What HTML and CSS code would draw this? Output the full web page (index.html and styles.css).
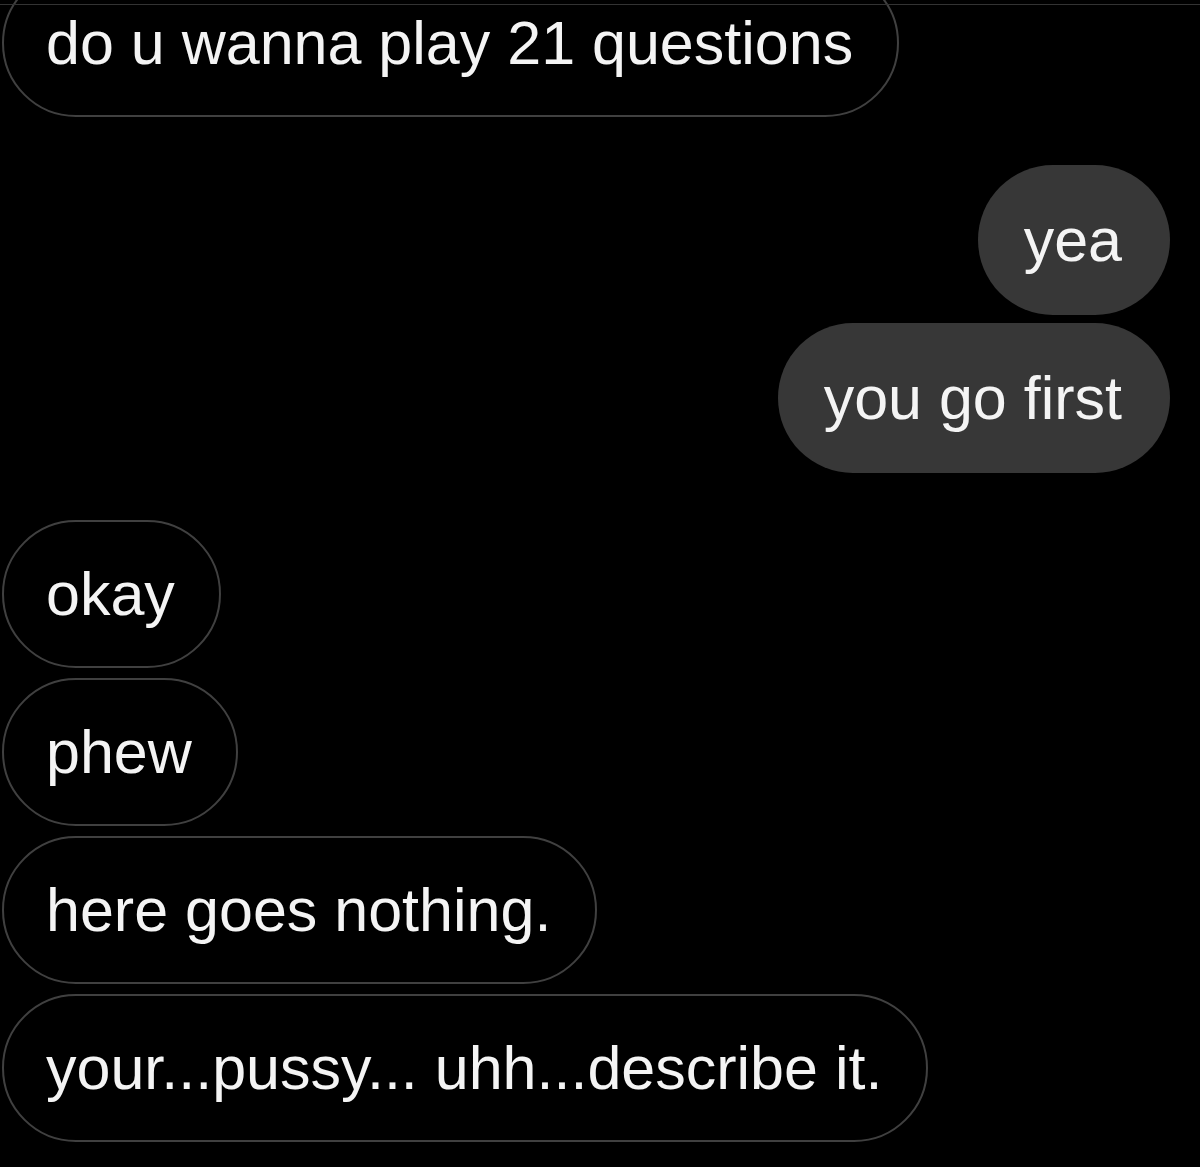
FILE: index.html
```html
<!DOCTYPE html>
<html lang="en">
<head>
<meta charset="utf-8">
<title>Chat</title>
<link rel="stylesheet" href="styles.css">
</head>
<body>
<div class="chat">
  <div class="bubble in first">do u wanna play 21 questions</div>
  <div class="bubble out gap-big">yea</div>
  <div class="bubble out gap-small">you go first</div>
  <div class="bubble in gap-big2">okay</div>
  <div class="bubble in gap">phew</div>
  <div class="bubble in gap">here goes nothing.</div>
  <div class="bubble in gap">your...pussy... uhh...describe it.</div>
</div>
</body>
</html>
```

FILE: styles.css
```css
html, body {
  margin: 0;
  padding: 0;
  background: #000;
}

body {
  width: 1200px;
  height: 1167px;
  overflow: hidden;
}

.chat {
  position: relative;
  display: flex;
  flex-direction: column;
  padding: 5px 30px 0 2px;
}

/* thin top edge line drawn over the first bubble */
.chat::before {
  content: "";
  position: absolute;
  left: 0;
  right: 0;
  top: 4px;
  height: 1px;
  background: #333;
  z-index: 2;
}

.bubble {
  box-sizing: border-box;
  display: flex;
  align-items: center;
  font-family: "Liberation Sans", Arial, sans-serif;
  font-size: 61px;
  color: #f4f4f4;
  white-space: nowrap;
}

.in {
  align-self: flex-start;
  height: 148px;
  border: 2px solid #404040;
  border-radius: 74px;
  padding: 0 44px 0 42px;
}

.out {
  align-self: flex-end;
  height: 150px;
  background: #373737;
  border-radius: 75px;
  padding: 0 48px 0 46px;
}

.first { margin-top: -36px; }
.gap-big { margin-top: 48px; }
.gap-small { margin-top: 8px; }
.gap-big2 { margin-top: 47px; }
.gap { margin-top: 10px; }
```
